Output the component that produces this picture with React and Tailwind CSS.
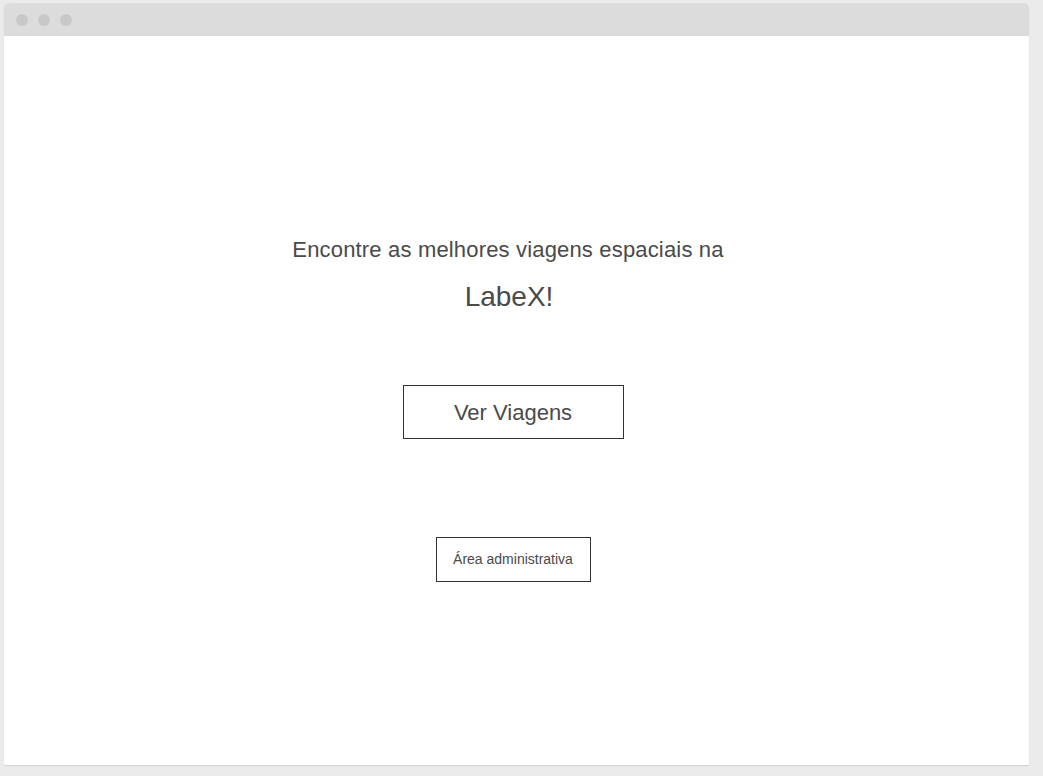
const App = () => {
  return (
    <div
      className="w-[1043px] h-[776px] bg-[#ebebeb] pt-[3px] pl-[4px]"
      style={{ fontFamily: '"Liberation Sans", Arial, sans-serif' }}
    >
      <div className="w-[1025px] h-[762px] bg-white rounded-t-[5px] flex flex-col shadow-[0_1px_1px_rgba(0,0,0,0.12)]">
        {/* Window title bar */}
        <div className="h-[33px] bg-[#dcdcdc] rounded-t-[5px] flex items-center gap-[10px] pl-[12px] shrink-0">
          <span className="w-[12px] h-[12px] rounded-full bg-[#c8c8c8]" />
          <span className="w-[12px] h-[12px] rounded-full bg-[#c8c8c8]" />
          <span className="w-[12px] h-[12px] rounded-full bg-[#c8c8c8]" />
        </div>

        {/* Home content */}
        <div className="flex flex-col items-center pt-[200px] pr-[7px] text-[#4a4a4a]">
          <p className="text-[22px] leading-[28px] tracking-[0.17px] mr-[10px]">
            Encontre as melhores viagens espaciais na
          </p>
          <h1 className="text-[28px] leading-[36px] mt-[15px] mr-[8px]">LabeX!</h1>

          <button className="mt-[70px] w-[221px] h-[54px] border border-[#333333] text-[22px] text-[#4a4a4a] bg-white">
            Ver Viagens
          </button>

          <button className="mt-[98px] w-[155px] h-[45px] border border-[#333333] text-[14px] text-[#4a4a4a] bg-white">
            Área administrativa
          </button>
        </div>
      </div>
    </div>
  );
};

export default App;
